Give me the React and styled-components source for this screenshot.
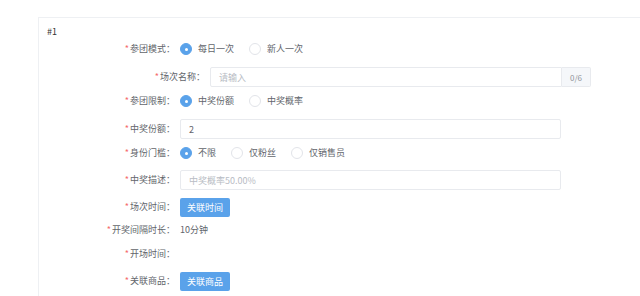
import React from "react";
import styled, { createGlobalStyle } from "styled-components";

const Global = createGlobalStyle`
  html, body { margin: 0; padding: 0; background: #fff; }
  body { font-family: "Noto Sans CJK SC", "Noto Sans", sans-serif; }
  * { box-sizing: border-box; }
`;

const BLUE = "#5aa2ea";
const TEXT = "#62656b";

const Page = styled.div`
  width: 640px;
  height: 296px;
  overflow: hidden;
  padding: 17px 0 0 38px;
`;

const Card = styled.div`
  margin-right: -20px;
  height: 300px;
  border-top: 1px solid #eef0f3;
  border-left: 1px solid #eef0f3;
  padding: 7px 0 0 8px;
`;

const Title = styled.div`
  font-size: 9px;
  line-height: 14px;
  color: #333;
  height: 14px;
`;

const Form = styled.div`
  display: flex;
  flex-direction: column;
`;

const Row = styled.div`
  display: flex;
  align-items: center;
  height: ${(p) => p.$h || 24}px;
  margin-top: ${(p) => p.$mt || 0}px;
  margin-left: ${(p) => (p.$nested ? 30 : 0)}px;
`;

const Label = styled.div`
  width: 128px;
  flex: none;
  text-align: right;
  font-size: 9px;
  line-height: 14px;
  color: ${TEXT};
  margin-right: 5px;
  white-space: nowrap;
`;

const Star = styled.span`
  color: #f56c6c;
  margin-right: 1px;
`;

const RadioGroup = styled.div`
  display: flex;
  align-items: center;
`;

const RadioItem = styled.label`
  display: flex;
  align-items: center;
  margin-right: 15px;
  font-size: 9px;
  line-height: 14px;
  color: ${TEXT};
`;

const Circle = styled.span`
  width: 12px;
  height: 12px;
  border-radius: 50%;
  border: 1px solid ${(p) => (p.$on ? BLUE : "#e2e4e9")};
  background: ${(p) => (p.$on ? BLUE : "#fff")};
  display: flex;
  align-items: center;
  justify-content: center;
  margin-right: 6px;
  &::after {
    content: "";
    width: 3px;
    height: 3px;
    border-radius: 50%;
    background: #fff;
    display: ${(p) => (p.$on ? "block" : "none")};
  }
`;

const InputGroup = styled.div`
  display: flex;
  width: 381px;
  height: 20px;
`;

const Input = styled.div`
  flex: 1;
  height: 20px;
  border: 1px solid #e8eaee;
  border-radius: ${(p) => (p.$suffix ? "2px 0 0 2px" : "2px")};
  padding-left: 8px;
  display: flex;
  align-items: center;
  font-size: 9px;
  color: ${(p) => (p.$placeholder ? "#b8bcc4" : TEXT)};
`;

const Suffix = styled.div`
  width: 29px;
  height: 20px;
  background: #f5f7fa;
  border: 1px solid #e8eaee;
  border-left: none;
  border-radius: 0 2px 2px 0;
  font-size: 8px;
  color: #909399;
  display: flex;
  align-items: center;
  justify-content: center;
`;

const Button = styled.button`
  width: 50px;
  height: 19px;
  border: none;
  border-radius: 2px;
  background: ${BLUE};
  color: #fff;
  font-family: inherit;
  font-size: 9px;
  padding: 0;
  display: flex;
  align-items: center;
  justify-content: center;
`;

const Value = styled.div`
  font-size: 9px;
  line-height: 14px;
  color: ${TEXT};
`;

const Radios = ({ items, active }) => (
  <RadioGroup>
    {items.map((t, i) => (
      <RadioItem key={t}>
        <Circle $on={i === active} />
        {t}
      </RadioItem>
    ))}
  </RadioGroup>
);

const L = ({ children }) => (
  <Label>
    <Star>*</Star>
    {children}
  </Label>
);

export default function App() {
  return (
    <>
      <Global />
      <Page>
        <Card>
          <Title>#1</Title>
          <Form>
            <Row $mt={-2}>
              <L>参团模式：</L>
              <Radios items={["每日一次", "新人一次"]} active={0} />
            </Row>
            <Row $mt={4} $nested>
              <L>场次名称：</L>
              <InputGroup>
                <Input $suffix $placeholder>请输入</Input>
                <Suffix>0/6</Suffix>
              </InputGroup>
            </Row>
            <Row>
              <L>参团限制：</L>
              <Radios items={["中奖份额", "中奖概率"]} active={0} />
            </Row>
            <Row $mt={4}>
              <L>中奖份额：</L>
              <InputGroup>
                <Input>2</Input>
              </InputGroup>
            </Row>
            <Row>
              <L>身份门槛：</L>
              <Radios items={["不限", "仅粉丝", "仅销售员"]} active={0} />
            </Row>
            <Row $mt={3}>
              <L>中奖描述：</L>
              <InputGroup>
                <Input $placeholder>中奖概率50.00%</Input>
              </InputGroup>
            </Row>
            <Row $mt={3}>
              <L>场次时间：</L>
              <Button>关联时间</Button>
            </Row>
            <Row $h={22}>
              <L>开奖间隔时长：</L>
              <Value>10分钟</Value>
            </Row>
            <Row $mt={1}>
              <L>开场时间：</L>
            </Row>
            <Row $mt={3}>
              <L>关联商品：</L>
              <Button>关联商品</Button>
            </Row>
          </Form>
        </Card>
      </Page>
    </>
  );
}
